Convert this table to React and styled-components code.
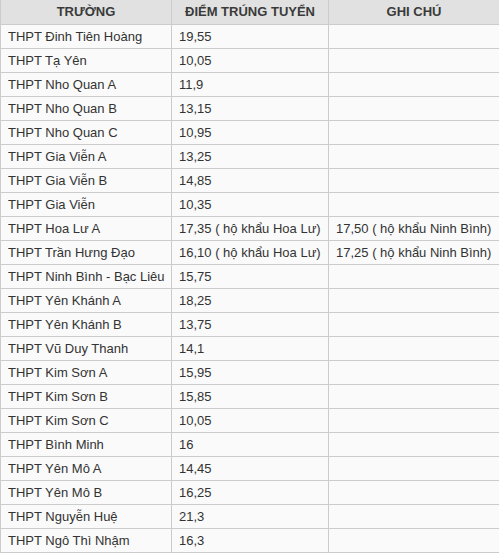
import React from "react";
import styled, { createGlobalStyle } from "styled-components";

const Global = createGlobalStyle`
  html, body { margin: 0; padding: 0; background: #ffffff; }
  body { font-family: "Liberation Sans", Arial, sans-serif; }
`;

const Table = styled.table`
  width: 499px;
  border-collapse: collapse;
  table-layout: fixed;
  font-family: "Liberation Sans", Arial, sans-serif;
  font-size: 13px;
  color: #333333;
  background: #fafafa;
`;

const HeadCell = styled.th`
  height: 24px;
  padding: 0 8px;
  background: #e1e1e1;
  border: 1px solid #cccccc;
  border-top: none;
  font-weight: bold;
  color: #3a3a3a;
  text-align: center;
  vertical-align: middle;
  line-height: 24px;
`;

const Row = styled.tr`
  height: 24px;
`;

const Cell = styled.td`
  height: 23px;
  padding: 0 7px;
  border: 1px solid #cccccc;
  text-align: left;
  vertical-align: middle;
  line-height: 23px;
  white-space: nowrap;
  overflow: hidden;
`;

const rows = [
  ["THPT Đinh Tiên Hoàng", "19,55", ""],
  ["THPT Tạ Yên", "10,05", ""],
  ["THPT Nho Quan A", "11,9", ""],
  ["THPT Nho Quan B", "13,15", ""],
  ["THPT Nho Quan C", "10,95", ""],
  ["THPT Gia Viễn A", "13,25", ""],
  ["THPT Gia Viễn B", "14,85", ""],
  ["THPT Gia Viễn", "10,35", ""],
  ["THPT Hoa Lư A", "17,35 ( hộ khẩu Hoa Lư)", "17,50 ( hộ khẩu Ninh Bình)"],
  ["THPT Trần Hưng Đạo", "16,10 ( hộ khẩu Hoa Lư)", "17,25 ( hộ khẩu Ninh Bình)"],
  ["THPT Ninh Bình - Bạc Liêu", "15,75", ""],
  ["THPT Yên Khánh A", "18,25", ""],
  ["THPT Yên Khánh B", "13,75", ""],
  ["THPT Vũ Duy Thanh", "14,1", ""],
  ["THPT Kim Sơn A", "15,95", ""],
  ["THPT Kim Sơn B", "15,85", ""],
  ["THPT Kim Sơn C", "10,05", ""],
  ["THPT Bình Minh", "16", ""],
  ["THPT Yên Mô A", "14,45", ""],
  ["THPT Yên Mô B", "16,25", ""],
  ["THPT Nguyễn Huệ", "21,3", ""],
  ["THPT Ngô Thì Nhậm", "16,3", ""],
];

export default function App() {
  return (
    <>
      <Global />
      <Table>
        <colgroup>
          <col style={{ width: "171px" }} />
          <col style={{ width: "157px" }} />
          <col style={{ width: "171px" }} />
        </colgroup>
        <thead>
          <tr>
            <HeadCell>TRƯỜNG</HeadCell>
            <HeadCell>ĐIỂM TRÚNG TUYỂN</HeadCell>
            <HeadCell>GHI CHÚ</HeadCell>
          </tr>
        </thead>
        <tbody>
          {rows.map((r, i) => (
            <Row key={i}>
              <Cell>{r[0]}</Cell>
              <Cell>{r[1]}</Cell>
              <Cell>{r[2]}</Cell>
            </Row>
          ))}
        </tbody>
      </Table>
    </>
  );
}
